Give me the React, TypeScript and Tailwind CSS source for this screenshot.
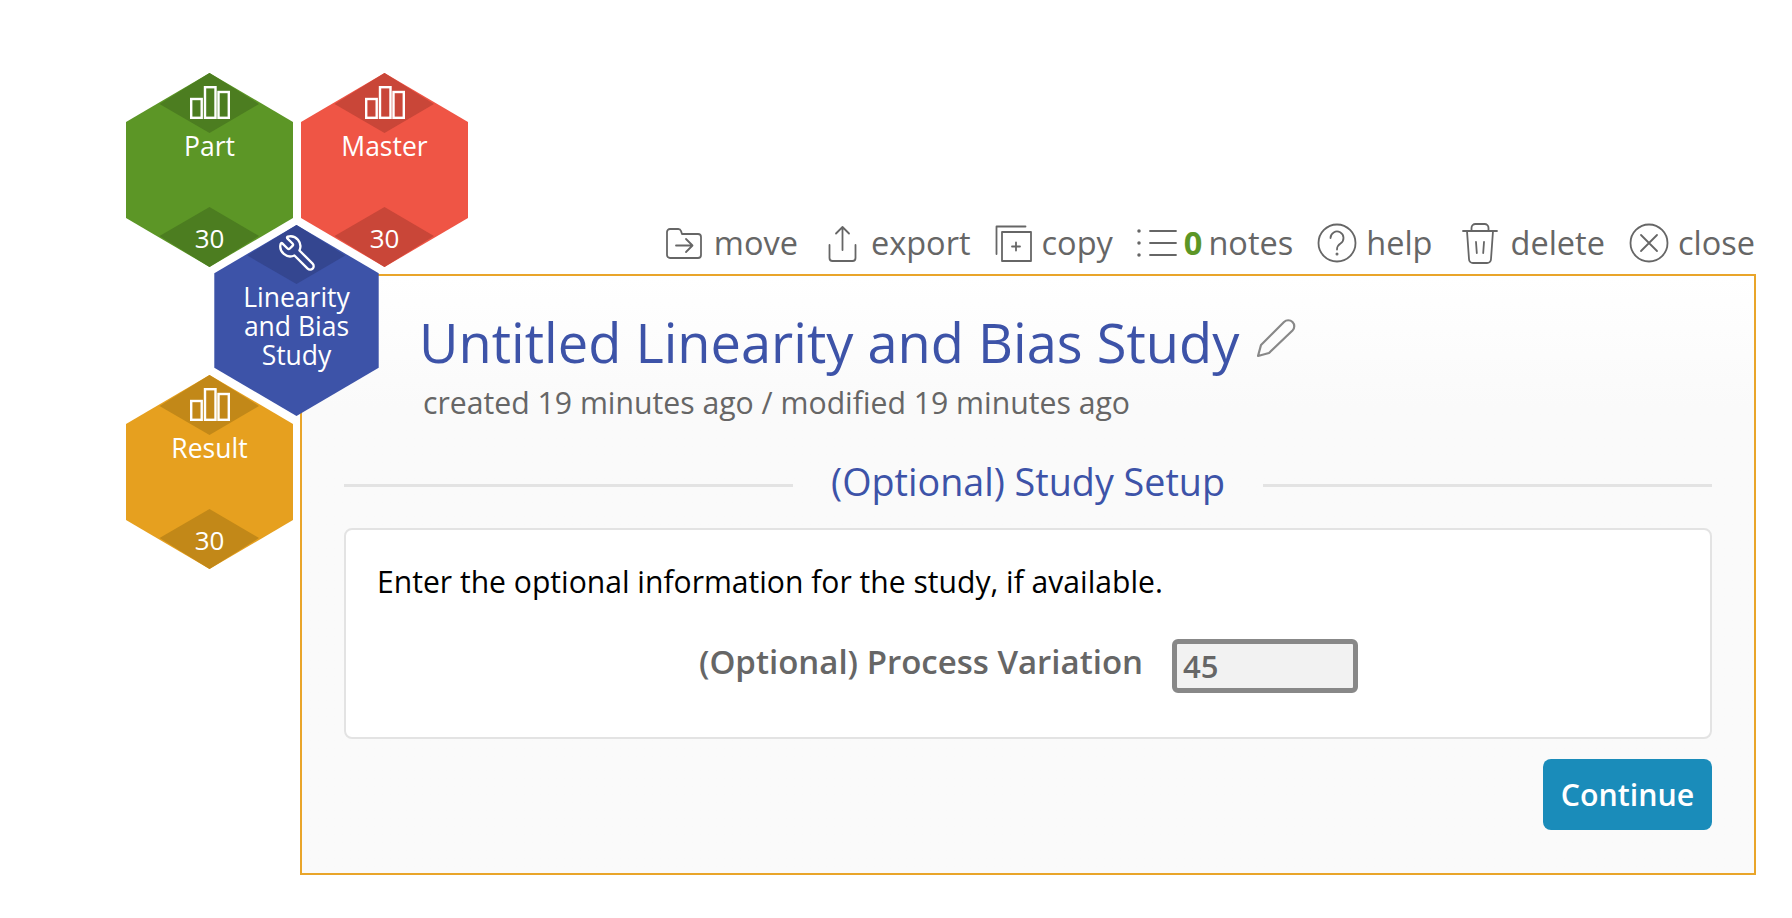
import { Wrench } from "lucide-react";

const hexes = [
  { name: ["Part"], count: "30", fill: "#5c9626", dark: "#4c7d20", pos: "left-[126px] top-[73px]" },
  { name: ["Master"], count: "30", fill: "#ef5545", dark: "#c94638", pos: "left-[301px] top-[73px]" },
  { name: ["Result"], count: "30", fill: "#e6a01f", dark: "#c28818", pos: "left-[126px] top-[375px]" },
];

function BarsIcon() {
  return (
    <svg width="40" height="33" viewBox="0 0 40 33" fill="none" stroke="#fff" strokeWidth="2.4" className="block">
      <rect x="1.2" y="13" width="10.5" height="18.8" />
      <rect x="15" y="1.2" width="10.5" height="30.6" />
      <rect x="28.5" y="6" width="10.3" height="25.8" />
    </svg>
  );
}

function HexBack({ fill, dark, bottom = true }: { fill: string; dark: string; bottom?: boolean }) {
  return (
    <svg viewBox="0 0 167 194" className="absolute inset-0 h-full w-full">
      <polygon points="83.5,0 167,49 167,145 83.5,194 0,145 0,49" fill={fill} />
      <polygon points="83.5,0 133,31 83.5,60 33.5,31" fill={dark} />
      {bottom && <polygon points="83.5,134 133,163 83.5,194 33.5,163" fill={dark} />}
    </svg>
  );
}

function Hex({ name, count, fill, dark, pos }: (typeof hexes)[number]) {
  return (
    <div className={`absolute h-[194px] w-[167px] text-white ${pos}`}>
      <HexBack fill={fill} dark={dark} />
      <div className="relative flex h-full flex-col items-center pt-[13px]">
        <BarsIcon />
        <div className="mt-[9px] text-[26.5px] leading-[36px]">{name[0]}</div>
        <div className="mt-auto pb-[11px] text-[26px] leading-[36px]">{count}</div>
      </div>
    </div>
  );
}

function ToolIcon({ children, w, h }: { children: React.ReactNode; w: number; h: number }) {
  return (
    <svg width={w} height={h} viewBox={`0 0 ${w} ${h}`} fill="none" stroke="#666" strokeWidth="1.8" strokeLinecap="round" strokeLinejoin="round" className="shrink-0">
      {children}
    </svg>
  );
}

const tools = [
  {
    label: "move",
    gap: "gap-[12px]",
    icon: (
      <ToolIcon w={36} h={32}>
        <path d="M1 5 a3 3 0 0 1 3-3 h8 a3 3 0 0 1 3 2 l1 3 h16 a3 3 0 0 1 3 3 v18 a3 3 0 0 1-3 3 H4 a3 3 0 0 1-3-3 Z" />
        <path d="M10 18.5 h16 M20 12 l6.5 6.5 -6.5 6.5" />
      </ToolIcon>
    ),
  },
  {
    label: "export",
    gap: "ml-[6px] gap-[14px]",
    icon: (
      <ToolIcon w={29} h={37}>
        <path d="M14.5 2 v23 M8 8.5 l6.5-6.5 6.5 6.5" />
        <path d="M1.5 20 v13 a3 3 0 0 0 3 3 h20 a3 3 0 0 0 3-3 v-13" />
      </ToolIcon>
    ),
  },
  {
    label: "copy",
    gap: "gap-[10px]",
    icon: (
      <ToolIcon w={37} h={37}>
        <path d="M1.5 29 V1.5 h29" />
        <rect x="7" y="7" width="29" height="29" />
        <path d="M17 21.5 h8 M21 17.5 v8" />
      </ToolIcon>
    ),
  },
];

const tools2 = [
  {
    label: "help",
    gap: "gap-[9px]",
    icon: (
      <ToolIcon w={40} h={40}>
        <circle cx="20" cy="20" r="18.5" />
        <path d="M13.5 15 a6.5 6.5 0 1 1 10 5.5 c-2.5 1.6-3.5 3-3.5 6" />
        <circle cx="20" cy="31" r="0.6" />
      </ToolIcon>
    ),
  },
  {
    label: "delete",
    gap: "ml-[5px] gap-[13px]",
    icon: (
      <ToolIcon w={36} h={43}>
        <path d="M1 9 h34 M9.5 9 V6 a4 4 0 0 1 4-4 h9 a4 4 0 0 1 4 4 v3" />
        <path d="M5 9 l2 28 a4 4 0 0 0 4 4 h14 a4 4 0 0 0 4-4 l2-28" />
        <path d="M14 20 l.8 11 M22 20 l-.8 11" />
      </ToolIcon>
    ),
  },
  {
    label: "close",
    gap: "gap-[9px]",
    icon: (
      <ToolIcon w={40} h={40}>
        <circle cx="20" cy="20" r="18.5" />
        <path d="M12 12 l16 16 M28 12 l-16 16" />
      </ToolIcon>
    ),
  },
];

function Tool({ label, gap, icon }: { label: string; gap: string; icon: React.ReactNode }) {
  return (
    <div className={`flex items-center ${gap}`}>
      {icon}
      <span>{label}</span>
    </div>
  );
}

export default function App() {
  return (
    <div className="relative h-[918px] bg-white pl-[300px] pr-[36px] pt-[217px] font-['Open_Sans',sans-serif]">
      <div className="flex h-[52px] items-center justify-end gap-[24px] pr-[1px] text-[32.5px] leading-none text-[#666]">
        {tools.map((t) => (
          <Tool key={t.label} {...t} />
        ))}
        <div className="flex items-center">
          <ToolIcon w={40} h={30}>
            <path d="M2 3 v.1 M2 15 v.1 M2 27 v.1" strokeWidth="3.5" />
            <path d="M13 3 h26 M13 15 h26 M13 27 h26" />
          </ToolIcon>
          <span className="ml-[7px] font-bold text-[#5c9626]">0</span>
          <span className="ml-[6px]">notes</span>
        </div>
        {tools2.map((t) => (
          <Tool key={t.label} {...t} />
        ))}
      </div>

      <div className="mt-[5px] h-[601px] border-2 border-[#e9a52a] bg-linear-to-b from-white to-[#fafafa] to-[22%] px-[42px] pt-[29px]">
        <div className="flex items-start pl-[75px]">
          <h1 className="text-[54.2px] leading-[74px] text-[#3d53a8]">Untitled Linearity and Bias Study</h1>
          <svg width="40" height="40" viewBox="0 0 40 40" fill="none" stroke="#888" strokeWidth="2.2" strokeLinejoin="round" className="ml-[17px] mt-[13px]">
            <path d="M2 38 L5 27 L28 4 a6 6 0 0 1 8.5 8.5 L13 35 Z" />
          </svg>
        </div>
        <p className="mt-[3px] pl-[79px] text-[30.2px] leading-[41px] text-[#666]">created 19 minutes ago / modified 19 minutes ago</p>

        <div className="mt-[33px] flex items-center">
          <div className="mt-[7px] h-[3px] flex-1 bg-[#e3e3e3]" />
          <h2 className="px-[38px] text-[37.7px] leading-[51px] text-[#3d53a8]">(Optional) Study Setup</h2>
          <div className="mt-[7px] h-[3px] flex-1 bg-[#e3e3e3]" />
        </div>

        <div className="mt-[21px] h-[211px] rounded-[8px] border-2 border-[#e3e3e3] bg-white px-[31px] pt-[31px]">
          <p className="text-[30.1px] leading-[41px] text-black">Enter the optional information for the study, if available.</p>
          <div className="mt-[33px] flex items-start justify-center gap-[29px] pl-[1px]">
            <label className="mt-[5px] text-[33px] font-semibold leading-[44px] text-[#666]">(Optional) Process Variation</label>
            <div className="mt-[4px] flex h-[54px] w-[186px] items-center rounded-[6px] border-[5px] border-[#888] bg-[#f2f2f2] px-[6px] text-[31px] font-semibold text-[#666]">45</div>
          </div>
        </div>

        <div className="mt-[20px] flex justify-end">
          <button className="h-[71px] w-[169px] rounded-[8px] bg-[#1a8cba] text-[30.3px] font-semibold text-white">Continue</button>
        </div>
      </div>

      {hexes.map((h) => (
        <Hex key={h.name[0]} {...h} />
      ))}
      <div className="absolute left-[213px] top-[225px] h-[191px] w-[167px] text-white">
        <HexBack fill="#3d53a8" dark="#344690" bottom={false} />
        <div className="relative flex h-full flex-col items-center pt-[8px]">
          <Wrench size={40} strokeWidth={1.4} className="-scale-x-100" />
          <div className="mt-[10px] text-center text-[26.5px] leading-[29px]">
            Linearity
            <br />
            and Bias
            <br />
            Study
          </div>
        </div>
      </div>
    </div>
  );
}
